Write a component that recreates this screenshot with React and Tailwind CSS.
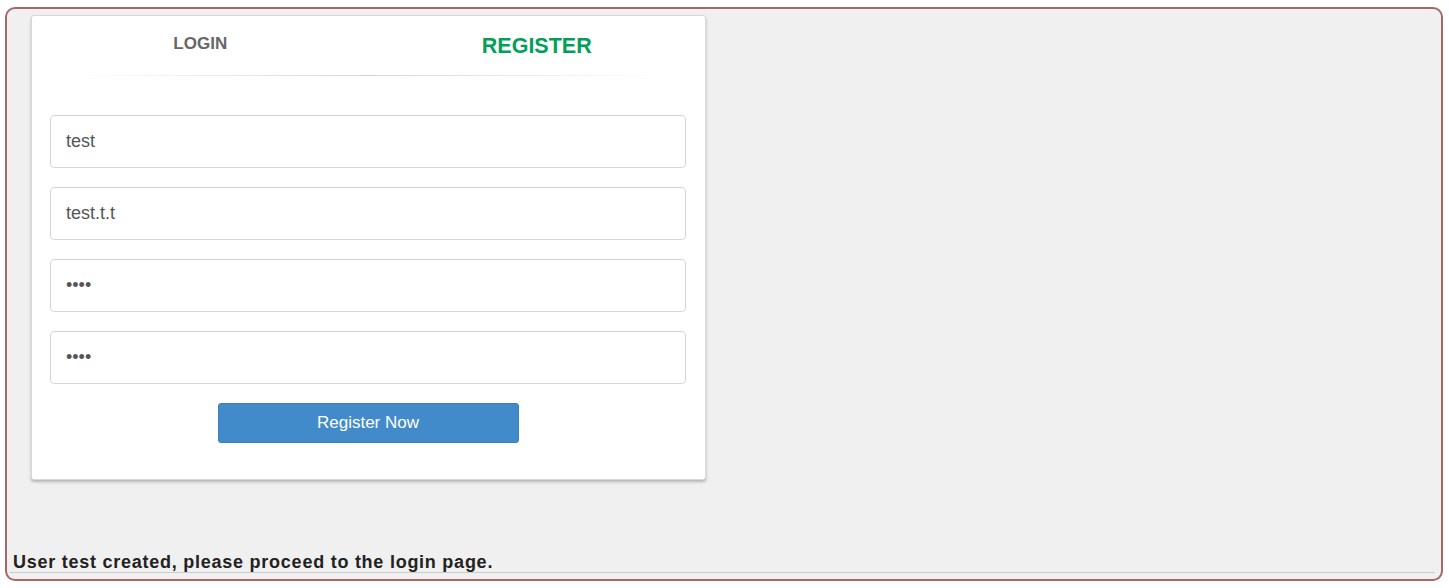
import React from 'react';

const FIELDS = [
  { type: 'text', value: 'test' },
  { type: 'text', value: 'test.t.t' },
  { type: 'password', value: 'test' },
  { type: 'password', value: 'test' },
];

export default function App() {
  return (
    <div className="w-[1449px] h-[588px] bg-white pt-[7px] pl-[5px] font-['Liberation_Sans',Arial,sans-serif]">
      <div className="w-[1438px] h-[574px] border-2 border-[#a86767] rounded-[10px] bg-[#f0f0f0] flex flex-col">
        <div className="ml-[24px] mt-[6px] w-[675px] bg-white border border-[#d9d9d9] rounded-[3px] shadow-[0_2px_3px_rgba(0,0,0,0.25)] pl-[18px] pr-[19px] pb-[36px]">
          <div className="grid grid-cols-2 h-[59px] -ml-[18px] -mr-[19px]">
            <button type="button" className="text-[17px] font-bold text-[#666] pt-[16px] self-start leading-[24px]">
              LOGIN
            </button>
            <button type="button" className="text-[21.5px] font-bold text-[#029f5b] pt-[17px] self-start leading-[26px]">
              REGISTER
            </button>
          </div>
          <div className="h-px mx-[22px] bg-[linear-gradient(to_right,rgba(221,221,221,0),#d6d6d6_50%,rgba(221,221,221,0))]" />
          <form className="mt-[39px] flex flex-col gap-[19px]" onSubmit={(e) => e.preventDefault()}>
            {FIELDS.map((field, i) => (
              <input
                key={i}
                type={field.type}
                value={field.value}
                readOnly
                autoFocus={i === FIELDS.length - 1}
                className="h-[53px] w-full border border-[#d6d6d6] rounded-[4px] px-[15px] text-[18px] text-[#555] caret-[#333] bg-white outline-none"
              />
            ))}
            <button
              type="submit"
              className="self-center w-[301px] h-[40px] rounded-[3px] bg-[#428bca] border border-[#3a7fbb] text-white text-[17px]"
            >
              Register Now
            </button>
          </form>
        </div>
        <div className="flex-1" />
        <p className="pl-[6px] text-[18px] tracking-[0.75px] font-bold text-[#222] leading-[20px]">
          User test created, please proceed to the login page.
        </p>
        <div className="h-px bg-[#cccccc] ml-[3px] mr-[6px] mb-[6px]" />
      </div>
    </div>
  );
}
